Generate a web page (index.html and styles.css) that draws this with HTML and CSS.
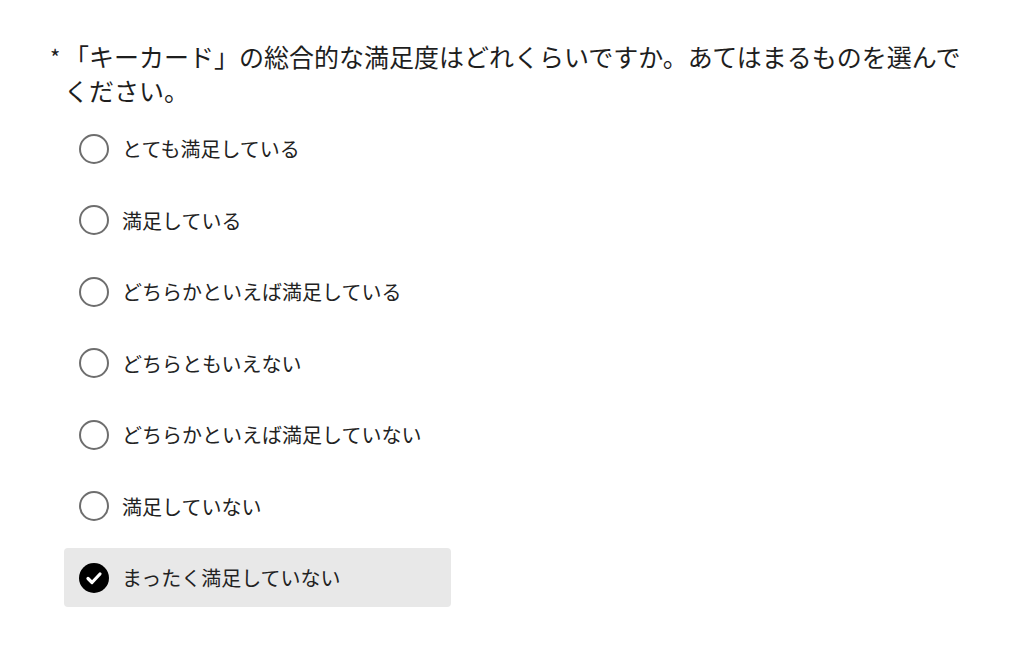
FILE: index.html
```html
<!DOCTYPE html>
<html lang="ja">
<head>
    <meta charset="UTF-8">
    <title>満足度アンケート</title>
    <link rel="stylesheet" href="styles.css">
</head>
<body>
    <div class="survey">
        <div class="question">
            <span class="required">*</span>
            <span class="question-text">「キーカード」の総合的な満足度はどれくらいですか。あてはまるものを選んでください。</span>
        </div>

        <ul class="options">
            <li class="option">
                <span class="radio"></span>
                <span class="label">とても満足している</span>
            </li>
            <li class="option">
                <span class="radio"></span>
                <span class="label">満足している</span>
            </li>
            <li class="option">
                <span class="radio"></span>
                <span class="label">どちらかといえば満足している</span>
            </li>
            <li class="option">
                <span class="radio"></span>
                <span class="label">どちらともいえない</span>
            </li>
            <li class="option">
                <span class="radio"></span>
                <span class="label">どちらかといえば満足していない</span>
            </li>
            <li class="option">
                <span class="radio"></span>
                <span class="label">満足していない</span>
            </li>
            <li class="option selected">
                <span class="radio">
                    <svg viewBox="0 0 30 30" width="30" height="30">
                        <circle cx="15" cy="15" r="15" fill="#000"/>
                        <path d="M9 15.5 L13 19.5 L21 11" fill="none" stroke="#fff" stroke-width="3.2" stroke-linecap="round" stroke-linejoin="round"/>
                    </svg>
                </span>
                <span class="label">まったく満足していない</span>
            </li>
        </ul>
    </div>
</body>
</html>
```

FILE: styles.css
```css
* {
    margin: 0;
    padding: 0;
    box-sizing: border-box;
}

body {
    background: #fff;
    color: #1e1e1e;
    font-family: "Noto Sans CJK JP", "Noto Sans", sans-serif;
}

.survey {
    width: 970px;
    padding: 39px 0 0 50px;
}

.question {
    display: flex;
    font-size: 25px;
    line-height: 34px;
}

.required {
    width: 14px;
    flex-shrink: 0;
    font-size: 22px;
}

.question-text {
    flex: 1;
}

.options {
    list-style: none;
    margin-top: 12px;
    padding-left: 14px;
    display: flex;
    flex-direction: column;
    gap: 12.5px;
}

.option {
    display: flex;
    align-items: center;
    width: 387px;
    height: 59px;
    padding-left: 15px;
    border-radius: 4px;
}

.option.selected {
    background: #e8e8e8;
}

.radio {
    width: 30px;
    height: 30px;
    border: 2px solid #6e6e6e;
    border-radius: 50%;
    flex-shrink: 0;
    margin-right: 13px;
}

.option.selected .radio {
    border: none;
}

.radio svg {
    display: block;
}

.label {
    font-size: 20px;
    color: #222;
}
```
